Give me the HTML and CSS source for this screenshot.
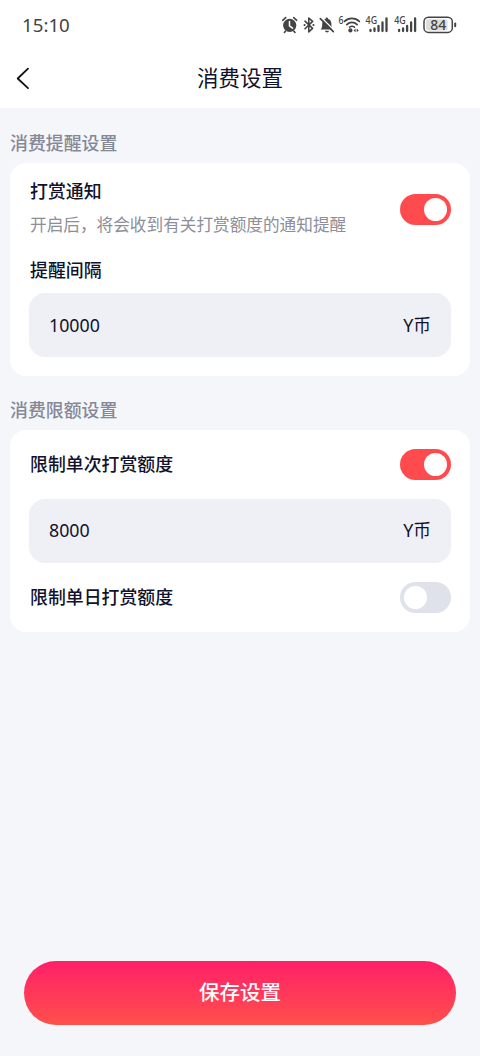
FILE: index.html
```html
<!DOCTYPE html>
<html lang="zh-CN">
<head>
<meta charset="utf-8">
<title>消费设置</title>
<link rel="stylesheet" href="styles.css">
</head>
<body>
<div class="screen">
  <div class="status">
    <span class="time">15:10</span>
    <svg class="status-icons" width="180" height="24" viewBox="280 13 180 24" fill="none" stroke="#444" stroke-linecap="round">
      <!-- alarm -->
      <circle cx="289.7" cy="25.3" r="6.6" fill="#444" stroke="none"/>
      <path d="M282.7 20.3l3-2.7M296.7 20.3l-3-2.7M285.6 31l-1.2 1.5M293.8 31l1.2 1.5" stroke-width="1.6"/>
      <path d="M289.5 21.5v4.3l3 2.3" stroke="#fff" stroke-width="1.5"/>
      <!-- bluetooth -->
      <path d="M305 21.2l7.6 7.2-3.8 3.6V18l3.8 3.4-7.6 7.4" stroke-width="1.6" stroke-linejoin="round"/>
      <path d="M304.5 25h.1M313.4 25h.1" stroke-width="2"/>
      <!-- muted bell -->
      <path d="M320.6 29.5c1.4-1.3 1.6-2.8 1.6-5.5 0-3 1.6-4.5 3.4-5v-.4a1.2 1.2 0 0 1 2.4 0v.4c1.9.5 3.4 2 3.4 5 0 2.7.2 4.2 1.7 5.5zM325 30.7h4c-.3 2.3-3.7 2.3-4 0z" fill="#444" stroke="none"/>
      <path d="M321.3 17.6l13 13" stroke="#fff" stroke-width="1.4"/>
      <path d="M320.3 18.6l13 13" stroke-width="1.7"/>
      <!-- wifi -->
      <path d="M344.5 21.4c4.2-4.1 10.6-4.1 14.8 0M346.8 24.6c3-2.9 7.3-2.9 10.3 0" stroke-width="1.8"/>
      <path d="M349.6 27.2c1.5-1.1 3.4-1.1 4.9 0" stroke-width="1.5"/>
      <circle cx="350.4" cy="30.4" r="2.1" fill="#444" stroke="none"/>
      <path d="M355.6 28.5l-2 1.9 2 1.9zM356.7 28.5l2 1.9-2 1.9z" fill="#444" stroke="none"/>
      <!-- signal bars -->
      <path d="M370.5 30v1M374.5 28.5v2.500M378.500 26v5M382.500 22.500v8.500M386.500 18.500v12.500M399.100 30v1M403.100 28.500v2.500M407.100 26v5M411.100 22.500v8.500M415.100 18.500v12.500" stroke-width="2.300"/>
      <!-- battery -->
      <rect x="424" y="17.200" width="28.300" height="15.200" rx="4.500" fill="#fff" stroke-width="1.500"/>
      <rect x="426" y="19.200" width="21.500" height="11.200" rx="2" fill="#ddd" stroke="none"/>
      <path d="M455.200 23.600v2.600" stroke-width="2"/>
      <g class="icon-text" fill="#444" stroke="none">
        <text x="338.500" y="23.500" font-size="10" textLength="5" lengthAdjust="spacingAndGlyphs">6</text>
        <text x="365.600" y="24.300" font-size="11" textLength="11.500" lengthAdjust="spacingAndGlyphs">4G</text>
        <text x="394.300" y="24.300" font-size="11" textLength="11.500" lengthAdjust="spacingAndGlyphs">4G</text>
        <text x="430.300" y="30" font-size="14" textLength="16" lengthAdjust="spacingAndGlyphs">84</text>
      </g>
    </svg>
  </div>
  <header class="nav">
    <svg class="back" width="14" height="24" viewBox="0 0 14 24" fill="none" stroke="#111" stroke-width="1.800" stroke-linecap="round" stroke-linejoin="round"><path d="M12 1.700L1.700 11.500 12 21.200"/></svg>
    <h1 class="title">消费设置</h1>
  </header>
  <main class="content">
    <h2 class="section-title">消费提醒设置</h2>
    <section class="card card-notice">
      <div class="row row-notice">
        <div class="copy">
          <div class="label">打赏通知</div>
          <div class="desc">开启后，将会收到有关打赏额度的通知提醒</div>
        </div>
        <span class="switch on"></span>
      </div>
      <div class="label interval">提醒间隔</div>
      <div class="field"><span>10000</span><span class="unit">Y币</span></div>
    </section>
    <h2 class="section-title second">消费限额设置</h2>
    <section class="card card-limit">
      <div class="row"><div class="label">限制单次打赏额度</div><span class="switch on"></span></div>
      <div class="field"><span>8000</span><span class="unit">Y币</span></div>
      <div class="row"><div class="label">限制单日打赏额度</div><span class="switch"></span></div>
    </section>
    <button class="save">保存设置</button>
  </main>
</div>
</body>
</html>
```
FILE: styles.css
```css
* { box-sizing: border-box; }
body { margin: 0; background: #fff; }
.screen {
  width: 480px;
  height: 1058px;
  display: flex;
  flex-direction: column;
  font-family: "Noto Sans", "Noto Sans CJK SC", sans-serif;
  color: #11122c;
  background: #fff;
  overflow: hidden;
}
.status {
  height: 50px;
  padding: 0 20px 0 22px;
  display: flex;
  align-items: center;
  justify-content: space-between;
}
.time { font-size: 18.7px; line-height: 24px; color: #444; }
.status-icons { display: block; }
.icon-text { font-family: "Noto Sans", sans-serif; font-weight: 500; }
.nav {
  height: 58px;
  padding: 0 16px;
  display: grid;
  grid-template-columns: 14px 1fr 14px;
  align-items: center;
}
.title { margin: 0; padding-bottom: 2px; text-align: center; font-size: 21.5px; line-height: 30px; font-weight: 400; }
.content {
  height: 948px;
  padding: 22px 10px 31px;
  display: flex;
  flex-direction: column;
  background: #f5f6fa;
}
.section-title {
  margin: 0 0 7px;
  font-size: 17.9px;
  line-height: 26px;
  font-weight: 500;
  color: #858896;
}
.section-title.second { margin-top: 21px; }
.card { padding: 0 19px 0 20px; border-radius: 16px; background: #fff; }
.card-notice { height: 213px; padding-top: 14px; }
.card-limit { height: 202px; padding-top: 18px; }
.row { height: 32px; display: flex; align-items: center; justify-content: space-between; }
.row-notice { height: 64px; }
.copy { padding-bottom: 2px; }
.label { font-size: 17.9px; line-height: 26px; font-weight: 500; }
.desc { margin-top: 8px; font-size: 16.65px; line-height: 26px; color: #8d8e98; }
.interval { margin-top: 16px; }
.field {
  height: 64px;
  margin: 9px 0 0 -1px;
  padding: 0 20px;
  display: flex;
  align-items: center;
  justify-content: space-between;
  border-radius: 16px;
  background: #eff0f6;
  font-size: 17.8px;
}
.unit { padding-bottom: 2px; }
.card-notice .field { margin-top: 10px; }
.card-limit .field { margin-top: 19px; margin-bottom: 18px; padding-bottom: 2px; }
.switch {
  width: 51px;
  height: 31px;
  padding: 4px;
  display: flex;
  border-radius: 16px;
  background: #dfe2eb;
}
.switch::before { content: ""; width: 23px; height: 23px; border-radius: 50%; background: #fff; }
.switch.on { justify-content: flex-end; background: #ff4b4d; }
.save {
  height: 64px;
  margin: auto 14px 0;
  padding: 0 0 4px;
  border: 0;
  border-radius: 32px;
  background: linear-gradient(#ff2068, #ff504b);
  color: #fff;
  font-family: inherit;
  font-size: 20.5px;
  font-weight: 500;
}
```
